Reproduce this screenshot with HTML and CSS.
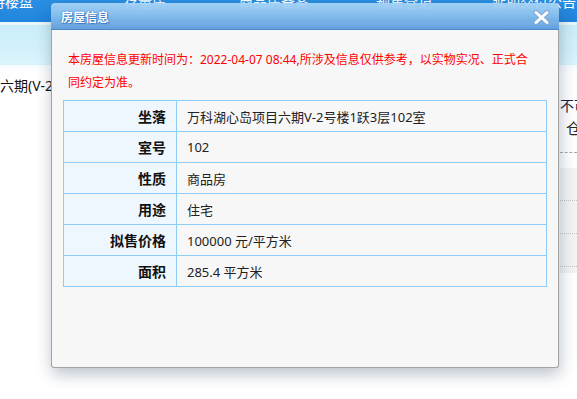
FILE: index.html
```html
<!DOCTYPE html>
<html lang="zh-CN">
<head>
<meta charset="utf-8">
<title>房屋信息</title>
<link rel="stylesheet" href="styles.css">
</head>
<body>
<div class="page">
  <div class="nav">
    <span class="nav-item">待楼盘</span>
    <span class="nav-item">存量房</span>
    <span class="nav-item">商品房备案</span>
    <span class="nav-item">预售登记</span>
    <span class="nav-item">延期交付公告</span>
  </div>
  <div class="nav-sep"></div>
  <div class="subnav"></div>
  <div class="content">
    <div class="main-col">
      <div class="addr">六期(V-2</div>
    </div>
    <div class="side-col">
      <div class="side-tip">不可售</div>
      <div class="side-icon">仓</div>
      <div class="side-dash"></div>
      <div class="side-list">
        <div class="side-row"></div>
        <div class="side-row"></div>
        <div class="side-row"></div>
      </div>
    </div>
  </div>
</div>

<div class="dialog">
  <div class="dialog-title">
    <span class="dialog-title-text">房屋信息</span>
    <svg class="dialog-close" width="17" height="15" viewBox="0 0 17 15">
      <path d="M3 2.5 L14 12.5 M14 2.5 L3 12.5" stroke="#7fa9d6" stroke-width="5" stroke-linecap="round" fill="none"/>
      <path d="M3 2.5 L14 12.5 M14 2.5 L3 12.5" stroke="#ffffff" stroke-width="3" stroke-linecap="round" fill="none"/>
    </svg>
  </div>
  <div class="dialog-body">
    <p class="notice">本房屋信息更新时间为：2022-04-07 08:44,所涉及信息仅供参考，以实物实况、正式合<br>同约定为准。</p>
    <table class="info">
      <colgroup><col class="col-label"><col></colgroup>
      <tr><td class="label">坐落</td><td class="value">万科湖心岛项目六期V-2号楼1跃3层102室</td></tr>
      <tr><td class="label">室号</td><td class="value">102</td></tr>
      <tr><td class="label">性质</td><td class="value">商品房</td></tr>
      <tr><td class="label">用途</td><td class="value">住宅</td></tr>
      <tr><td class="label">拟售价格</td><td class="value">100000 元/平方米</td></tr>
      <tr><td class="label">面积</td><td class="value">285.4 平方米</td></tr>
    </table>
  </div>
</div>
</body>
</html>
```

FILE: styles.css
```css
html, body {
  margin: 0;
  padding: 0;
  background: #ffffff;
  overflow: hidden;
}
body {
  font-family: "Noto Sans", "Noto Sans CJK SC", sans-serif;
  width: 577px;
  height: 399px;
  position: relative;
}

/* background page */
.nav {
  height: 22px;
  background: linear-gradient(#2b90e4, #1f84dc);
  display: grid;
  grid-template-columns: 124px 115px 137px 116px auto;
  overflow: hidden;
}
.nav-item {
  color: #ffffff;
  font-size: 14px;
  line-height: 16px;
  margin-top: -6px;
  white-space: nowrap;
}
.nav-item:first-child {
  margin-left: -9px;
}
.nav-sep {
  height: 3px;
  background: #eaf7fd;
}
.subnav {
  height: 40px;
  background: linear-gradient(#c9edf9, #d3f1fb 60%, #dcf4fc);
}
.content {
  display: grid;
  grid-template-columns: 560px 1fr;
  background: linear-gradient(#f4fbfe, #ffffff 8px);
}
.main-col {
  padding-top: 11px;
}
.addr {
  font-size: 14px;
  line-height: 20px;
  color: #111;
  white-space: nowrap;
}
.side-col {
  padding-top: 32px;
  overflow: hidden;
}
.side-tip {
  font-size: 14px;
  line-height: 18px;
  color: #1a1a40;
  white-space: nowrap;
}
.side-icon {
  font-size: 15px;
  line-height: 20px;
  margin-top: 3px;
  padding-left: 6px;
  color: #2a2420;
}
.side-dash {
  margin-top: 14px;
  border-top: 1px dashed #a9a9a9;
}
.side-list {
  margin-top: 15px;
  background: #f4f4f4;
  padding-bottom: 6px;
}
.side-row {
  height: 32px;
  border-bottom: 1px dotted #c4c4c4;
}

/* dialog overlay */
.dialog {
  position: absolute;
  left: 51px;
  top: 3px;
  width: 508px;
  border-radius: 4px 4px 3px 3px;
  box-shadow: 1px 6px 16px rgba(40, 60, 90, 0.32);
}
.dialog-title {
  height: 26px;
  border-bottom: 1px solid #4a88cc;
  border-radius: 4px 4px 0 0;
  background: linear-gradient(rgba(166, 211, 246, 0.95), rgba(138, 193, 238, 0.96) 45%, rgba(96, 157, 220, 0.97));
  display: flex;
  align-items: center;
  justify-content: space-between;
  padding: 0 9px 0 10px;
}
.dialog-title-text {
  color: #ffffff;
  font-family: "Noto Sans CJK SC", sans-serif;
  font-size: 12px;
  font-weight: bold;
  text-shadow: 0 0 2px #3a78bd, 1px 1px 1px #3a78bd;
  margin-top: 1px;
}
.dialog-close {
  display: block;
  margin-top: 2px;
}
.dialog-body {
  background: #f7f7f7;
  border: 1px solid #a3a3a3;
  border-top: 0;
  border-radius: 0 0 3px 3px;
  padding: 18px 11px 0 11px;
  height: 319px;
}
.notice {
  margin: 0 0 6px 0;
  padding-left: 5px;
  font-size: 12px;
  line-height: 23px;
  color: #ff0000;
}
.info {
  width: 100%;
  border-collapse: collapse;
  table-layout: fixed;
  border: 1px solid #8ecdf7;
}
.col-label {
  width: 113px;
}
.info td {
  border: 1px solid #8ecdf7;
  height: 31px;
  padding: 0 10px;
  box-sizing: border-box;
}
.label {
  background: #eef6fe;
  text-align: right;
  font-size: 14px;
  font-weight: bold;
  color: #111;
  padding-right: 10px;
}
.value {
  font-size: 13px;
  color: #222;
  padding-left: 10px;
}
```
